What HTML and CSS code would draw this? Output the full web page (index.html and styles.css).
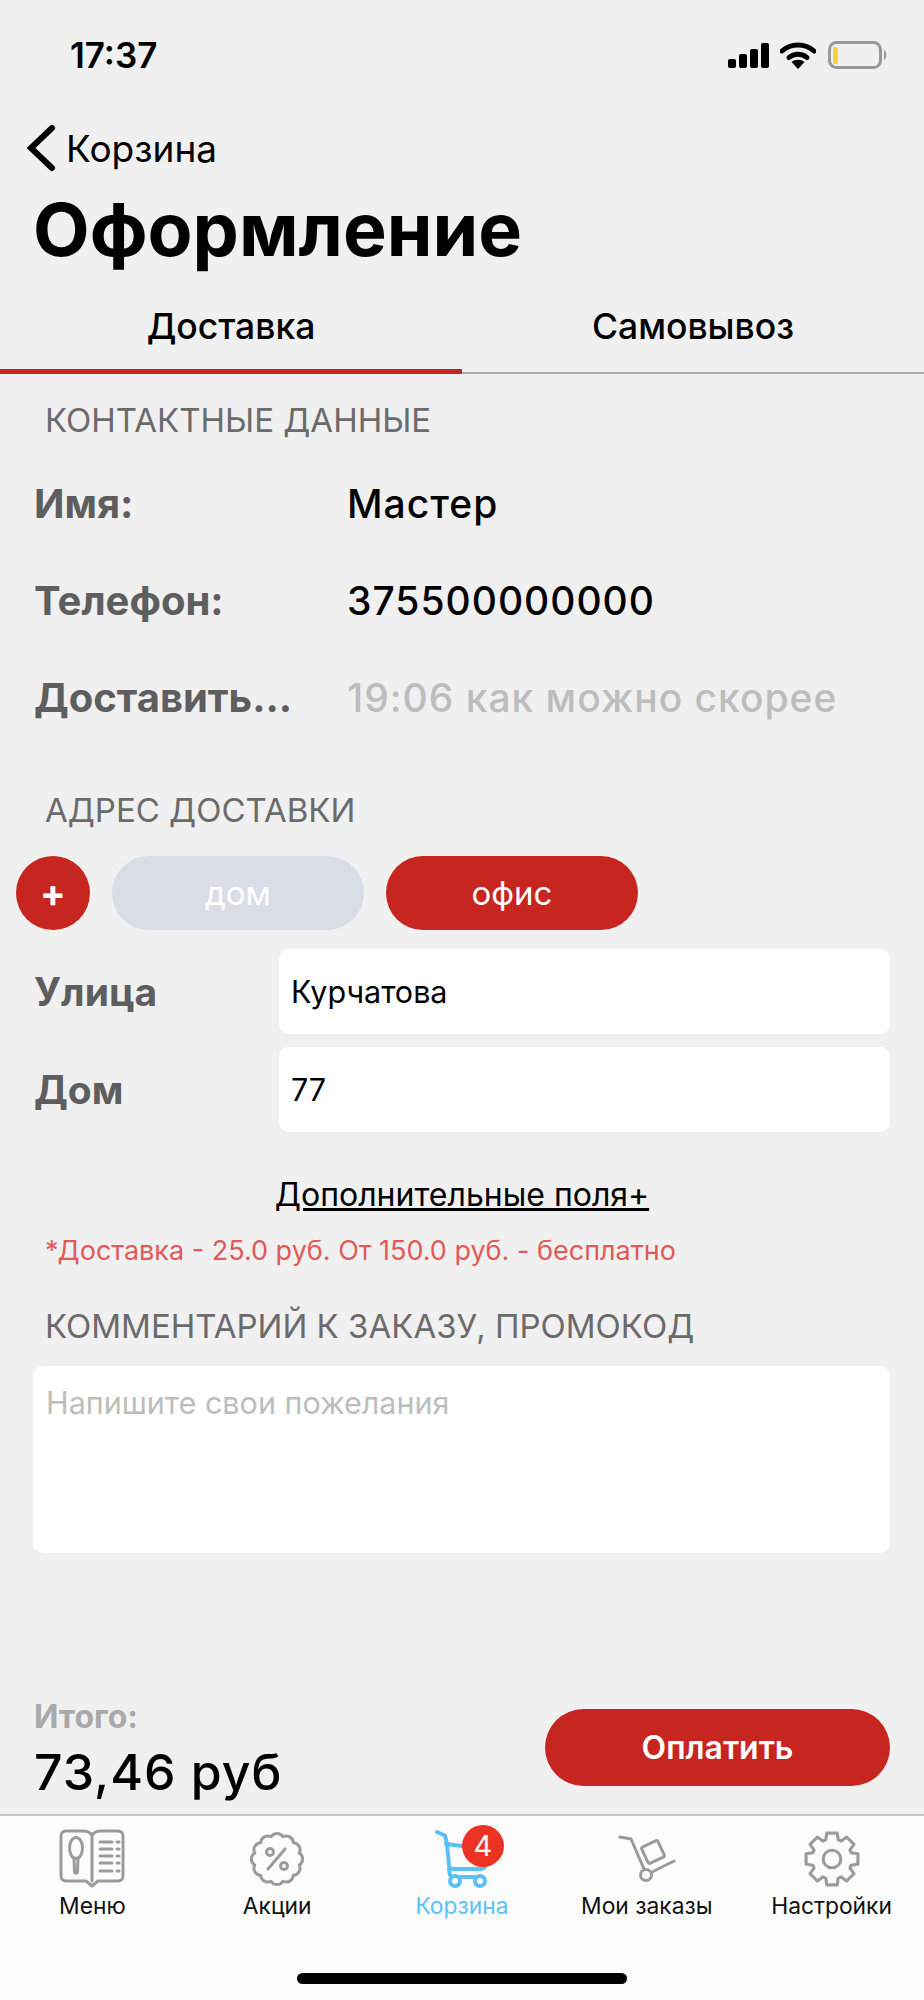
FILE: index.html
```html
<!DOCTYPE html>
<html>
<head>
    <title>Оформление</title>
    <link rel="stylesheet" href="styles.css">
</head>
<body>
    <div class="screen">
        <div class="status-bar">
            <span class="time">17:37</span>
            <div class="status-icons">
                <svg width="42" height="25" viewBox="0 0 42 25"><rect x="0" y="16" width="8" height="9" rx="2"/><rect x="11" y="11" width="8" height="14" rx="2"/><rect x="22" y="6" width="8" height="19" rx="2"/><rect x="33" y="0" width="8" height="25" rx="2"/></svg>
                <svg width="36" height="27" viewBox="0 0 36 27"><path class="wifi" d="M2 9 C11 1 25 1 34 9"/><path class="wifi" d="M9 15.5 C14 11 22 11 27 15.5"/><path d="M11.5 20 C15 17 21 17 24.5 20 L18 27 Z"/></svg>
                <svg class="battery-icon" width="60" height="28" viewBox="0 0 60 28"><rect class="battery" x="1.5" y="1.5" width="51" height="25" rx="7"/><rect class="battery-level" x="5" y="6" width="5" height="17" rx="1.5"/><path class="battery-nub" d="M56 9 C59 10 59 18 56 19 Z"/></svg>
            </div>
        </div>

        <a class="back">
            <svg width="30" height="48" viewBox="0 0 30 48"><path d="M26 4 L5 24 L26 44"/></svg>
            <span>Корзина</span>
        </a>
        <h1>Оформление</h1>

        <div class="tabs">
            <div class="tab active">Доставка</div>
            <div class="tab">Самовывоз</div>
        </div>

        <main class="content">
            <div class="section-title first">КОНТАКТНЫЕ ДАННЫЕ</div>
            <div class="info-row"><span class="label">Имя:</span><span class="value">Мастер</span></div>
            <div class="info-row"><span class="label">Телефон:</span><span class="value">375500000000</span></div>
            <div class="info-row"><span class="label">Доставить...</span><span class="value muted">19:06 как можно скорее</span></div>

            <div class="section-title address">АДРЕС ДОСТАВКИ</div>
            <div class="chips">
                <button class="add">+</button>
                <button class="chip">дом</button>
                <button class="chip selected">офис</button>
            </div>
            <div class="field"><span class="label">Улица</span><div class="input">Курчатова</div></div>
            <div class="field"><span class="label">Дом</span><div class="input">77</div></div>

            <a class="more">Дополнительные поля+</a>
            <p class="note">*Доставка - 25.0 руб. От 150.0 руб. - бесплатно</p>

            <div class="section-title comment">КОММЕНТАРИЙ К ЗАКАЗУ, ПРОМОКОД</div>
            <div class="textarea">Напишите свои пожелания</div>
        </main>

        <div class="total-bar">
            <div class="total">
                <div class="total-label">Итого:</div>
                <div class="total-sum">73,46 руб</div>
            </div>
            <button class="pay">Оплатить</button>
        </div>

        <nav class="tabbar">
            <div class="tabbar-items">
                <div class="item">
                    <svg class="icon" width="66" height="60" viewBox="0 0 66 60">
                        <path d="M33 52 V6 C30 2 27 2 24 2 H7 C4 2 2 4 2 7 V47 C2 50 4 52 7 52 H27 L33 57 L39 52 H59 C62 52 64 50 64 47 V7 C64 4 62 2 59 2 H42 C39 2 36 2 33 6"/>
                        <ellipse cx="17" cy="19" rx="6.5" ry="10.5"/>
                        <path d="M15 29 L15.5 42 C15.5 45 18.5 45 18.5 42 L19 29"/>
                        <path d="M41 13 H53 M41 20 H53 M41 27 H53 M41 34 H53 M41 42 H53"/>
                        <path class="dots" d="M58 13 H60 M58 20 H60 M58 27 H60 M58 34 H60 M58 42 H60"/>
                    </svg>
                    <span>Меню</span>
                </div>
                <div class="item">
                    <svg class="icon" width="54" height="54" viewBox="0 0 54 54">
                        <path d="M49.2 21 A7 7 0 0 1 49.2 33 A7 7 0 0 1 43.3 43.3 A7 7 0 0 1 33 49.2 A7 7 0 0 1 21 49.2 A7 7 0 0 1 10.7 43.3 A7 7 0 0 1 4.8 33 A7 7 0 0 1 4.8 21 A7 7 0 0 1 10.7 10.7 A7 7 0 0 1 21 4.8 A7 7 0 0 1 33 4.8 A7 7 0 0 1 43.3 10.7 A7 7 0 0 1 49.2 21 Z"/>
                        <circle cx="20" cy="20" r="3.5"/>
                        <circle cx="34" cy="34" r="3.5"/>
                        <path d="M35 17 L18 37"/>
                    </svg>
                    <span>Акции</span>
                </div>
                <div class="item current">
                    <div class="cart-wrap">
                        <svg class="icon" width="56" height="60" viewBox="0 0 56 60">
                            <path d="M3 3 L11 6.5 L13 15 L15 36 C15 39 17 40 20 40 H46 C49 40 51 38 52 35"/>
                            <path d="M12 15 L44 19"/>
                            <path d="M15 40 L16 46"/>
                            <circle cx="21" cy="52" r="5"/>
                            <circle cx="46" cy="52" r="5"/>
                            <path d="M26 48 H41"/>
                        </svg>
                        <span class="badge">4</span>
                    </div>
                    <span>Корзина</span>
                </div>
                <div class="item">
                    <svg class="icon" width="60" height="50" viewBox="0 0 60 50">
                        <path d="M3 3 L14 5 L27 35"/>
                        <circle cx="29" cy="41" r="5.5"/>
                        <path d="M35 38 L57 27"/>
                        <rect x="27" y="9" width="18" height="18" rx="2" transform="rotate(-25 36 18)"/>
                    </svg>
                    <span>Мои заказы</span>
                </div>
                <div class="item">
                    <svg class="icon" width="56" height="60" viewBox="0 0 54 54">
                        <polygon points="21,8.5 22,2 32,2 33,8.5 35.84,9.7 41.1,5.8 48.2,12.9 44.3,18.16 45.5,21 52,22 52,32 45.5,33 44.3,35.84 48.2,41.1 41.1,48.2 35.84,44.3 33,45.5 32,52 22,52 21,45.5 18.16,44.3 12.9,48.2 5.8,41.1 9.7,35.84 8.5,33 2,32 2,22 8.5,21 9.7,18.16 5.8,12.9 12.9,5.8 18.16,9.7"/>
                        <circle cx="27" cy="27" r="8.5"/>
                    </svg>
                    <span>Настройки</span>
                </div>
            </div>
            <div class="home-indicator"></div>
        </nav>
    </div>
</body>
</html>
```

FILE: styles.css
```css
* {
    box-sizing: border-box;
}
body {
    margin: 0;
    background: #f0f0f0;
    color: #000;
    font-family: Inter, "Noto Sans", sans-serif;
}
button {
    border: 0;
    font-family: inherit;
}
.screen {
    display: flex;
    flex-direction: column;
    height: 2000px;
    overflow: hidden;
}

/* status bar */
.status-bar {
    display: flex;
    justify-content: space-between;
    align-items: center;
    height: 110px;
    padding: 0 36px 0 70px;
}
.time {
    font-size: 35px;
    font-weight: 600;
}
.status-icons {
    display: flex;
    align-items: center;
    gap: 10px;
}
.status-icons svg {
    display: block;
}
.battery-icon {
    margin-left: 2px;
}
.wifi {
    fill: none;
    stroke: #000;
    stroke-width: 5;
    stroke-linecap: round;
}
.battery {
    fill: none;
    stroke: #999;
    stroke-width: 3;
}
.battery-level {
    fill: #fbd33d;
}
.battery-nub {
    fill: #999;
}

/* header */
.back {
    display: flex;
    align-items: center;
    gap: 10px;
    height: 64px;
    margin-top: 6px;
    padding-left: 26px;
    font-size: 37px;
}
.back svg {
    fill: none;
    stroke: #000;
    stroke-width: 6;
    stroke-linecap: round;
}
h1 {
    margin: 0;
    padding-left: 33px;
    height: 96px;
    line-height: 100px;
    font-size: 73.5px;
    font-weight: 700;
}
.tabs {
    display: grid;
    grid-template-columns: 1fr 1fr;
    height: 88px;
    margin-top: 10px;
    border-bottom: 2px solid #aaa;
}
.tab {
    position: relative;
    text-align: center;
    line-height: 82px;
    font-size: 35.5px;
    font-weight: 500;
}
.tab.active::after {
    content: "";
    position: absolute;
    left: 0;
    right: 0;
    bottom: -2px;
    height: 5px;
    background: #c6261f;
}

/* form */
.content {
    flex: 1;
}
.section-title {
    padding-left: 45px;
    font-size: 33px;
    line-height: 40px;
    color: #6b6b6b;
}
.section-title.first {
    margin-top: 26px;
}
.section-title.address {
    margin-top: 44px;
}
.section-title.comment {
    margin-top: 37px;
}
.info-row {
    display: flex;
    align-items: center;
    height: 97px;
    padding-left: 34px;
}
.section-title.first + .info-row {
    margin-top: 15px;
}
.label {
    font-size: 39px;
    font-weight: 700;
    color: #5e5e5e;
}
.info-row .label {
    width: 313px;
    font-size: 40px;
    white-space: nowrap;
}
.value {
    font-size: 39px;
    font-weight: 500;
    letter-spacing: 1px;
}
.value.muted {
    color: #bdbdbd;
}
.chips {
    display: flex;
    gap: 22px;
    height: 74px;
    margin-top: 26px;
    padding-left: 16px;
}
.add {
    width: 74px;
    padding: 0;
    border-radius: 50%;
    background: #c6261f;
    color: #fff;
    font-size: 38px;
    font-weight: 700;
}
.chip {
    width: 252px;
    border-radius: 37px;
    background: #d9dde6;
    color: #fff;
    font-size: 33px;
}
.chip.selected {
    background: #c6261f;
}
.field {
    display: flex;
    align-items: center;
    height: 85px;
    margin: 13px 34px 0 34px;
}
.chips + .field {
    margin-top: 19px;
}
.field .label {
    width: 245px;
    flex: none;
}
.input {
    flex: 1;
    height: 85px;
    padding: 23px 12px;
    border-radius: 10px;
    background: #fff;
    font-size: 30.5px;
    line-height: 40px;
}
.more {
    display: block;
    margin-top: 42px;
    text-align: center;
    font-size: 32px;
    line-height: 42px;
    text-decoration: underline;
}
.note {
    margin: 17px 0 0;
    padding-left: 45px;
    font-size: 27px;
    line-height: 36px;
    color: #df5a58;
}
.textarea {
    height: 187px;
    margin: 20px 34px 0 33px;
    padding: 17px 13px;
    border-radius: 10px;
    background: #fff;
    font-size: 30.5px;
    line-height: 40px;
    color: #bdbdbd;
}

/* total */
.total-bar {
    display: flex;
    justify-content: space-between;
    align-items: center;
    height: 112px;
    margin-bottom: 11px;
    padding: 0 34px;
}
.total {
    padding-top: 4px;
}
.total-label {
    font-size: 32px;
    font-weight: 700;
    color: #a9a9a9;
}
.total-sum {
    margin-top: 6px;
    font-size: 50px;
    font-weight: 500;
    letter-spacing: 1px;
}
.pay {
    width: 345px;
    height: 77px;
    border-radius: 39px;
    background: #c6261f;
    color: #fff;
    font-size: 32px;
    font-weight: 600;
}

/* tab bar */
.tabbar {
    height: 186px;
    border-top: 2px solid #c4c4c4;
    background: #fcfcfc;
}
.tabbar-items {
    display: grid;
    grid-template-columns: repeat(5, 1fr);
    height: 100px;
    padding-top: 13px;
}
.item {
    display: flex;
    flex-direction: column;
    align-items: center;
    font-size: 22.8px;
    color: #111;
}
.item .icon {
    display: block;
    height: 60px;
    margin-bottom: 3px;
    fill: none;
    stroke: #9b9b9b;
    stroke-width: 3;
    stroke-linecap: round;
    stroke-linejoin: round;
}
.item.current {
    color: #5ac0f7;
}
.item.current .icon {
    stroke: #5ac0f7;
    stroke-width: 4;
}
.cart-wrap {
    position: relative;
}
.badge {
    position: absolute;
    top: -4px;
    left: 28px;
    width: 42px;
    height: 42px;
    border-radius: 50%;
    background: #ec3323;
    color: #fff;
    font-size: 29px;
    line-height: 42px;
    text-align: center;
}
.home-indicator {
    width: 330px;
    height: 11px;
    margin: 57px auto 0;
    border-radius: 6px;
    background: #000;
}
```
